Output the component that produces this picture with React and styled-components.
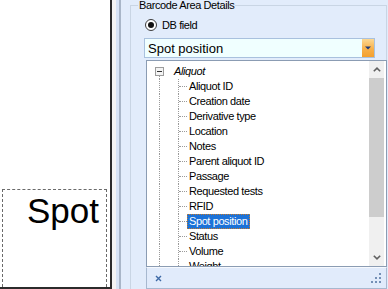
import React from 'react';
import styled, { createGlobalStyle } from 'styled-components';

const GlobalStyle = createGlobalStyle`
  html, body {
    margin: 0;
    padding: 0;
    overflow: hidden;
    background: #fff;
  }
`;

const Root = styled.div`
  position: relative;
  display: flex;
  width: 388px;
  height: 289px;
  overflow: hidden;
  font-family: "Liberation Sans", Arial, sans-serif;
  font-size: 11px;
  letter-spacing: -0.4px;
  color: #000;
`;

const Canvas = styled.div`
  box-sizing: border-box;
  width: 112px;
  height: 289px;
  flex-shrink: 0;
  display: flex;
  flex-direction: column;
  justify-content: flex-end;
  background: #fff;
  border-right: 2px solid #2b2b2b;
  border-bottom: 2px solid #2b2b2b;
`;

const LabelBox = styled.div`
  box-sizing: border-box;
  width: 105px;
  height: 98px;
  margin-left: 2px;
  border: 1px dashed #6a6a6a;
  border-bottom: none;
  padding: 1px 0 0 24px;
  font-size: 35px;
  line-height: 40px;
  letter-spacing: 0;
`;

const Panel = styled.div`
  flex: 1;
  display: flex;
  background: #e2ecfb;
`;

const Gap = styled.div`
  width: 4px;
  background: #f4f4f4;
`;

const Strip = styled.div`
  width: 3px;
  background: #d8e4f6;
`;

const Divider = styled.div`
  width: 2px;
  background: #a9b6c8;
`;

const Body = styled.div`
  flex: 1;
  display: flex;
  flex-direction: column;
  padding: 0 1px 0 9px;
  overflow: hidden;
`;

const Group = styled.fieldset`
  margin: 0;
  padding: 8px 0 0;
  min-width: 0;
  height: 330px;
  flex-shrink: 0;
  border: 1px solid #c9d5e4;
`;

const Legend = styled.legend`
  margin-left: 7px;
  padding: 0 1px;
  line-height: 11px;
  font-size: 11px;
`;

const RadioRow = styled.div`
  display: flex;
  align-items: center;
  gap: 5px;
  height: 12px;
  margin-left: 14px;
`;

const Combo = styled.div`
  box-sizing: border-box;
  display: flex;
  align-items: center;
  width: 231px;
  height: 20px;
  margin: 7px 0 0 13px;
  border: 1px solid #a9c1de;
  background: #f0ffff;
`;

const ComboText = styled.span`
  padding-left: 3px;
  font-size: 13px;
  letter-spacing: 0;
`;

const DropButton = styled.div`
  margin-left: auto;
  width: 12px;
  height: 18px;
  display: flex;
  align-items: center;
  justify-content: center;
  background: linear-gradient(#fcd892, #f7b04a 55%, #f4a02e);
`;

const Popup = styled.div`
  position: absolute;
  left: 146px;
  top: 60px;
  width: 241px;
  display: flex;
  flex-direction: column;
`;

const List = styled.div`
  box-sizing: border-box;
  height: 207px;
  display: flex;
  padding-right: 2px;
  border: 1px solid #8b9cb3;
  background: #fff;
`;

const Tree = styled.div`
  flex: 1;
  padding-top: 3px;
  overflow: hidden;
`;

const Row = styled.div`
  display: flex;
  height: 15px;
`;

const Gutter = styled.div`
  width: ${(p) => p.$w}px;
  flex-shrink: 0;
`;

const ExpanderCol = styled.div`
  width: 9px;
  display: flex;
  flex-direction: column;
  align-items: center;
  padding-top: 3px;
`;

const Stem = styled.div`
  flex: 1;
  width: 0;
  border-left: 1px dotted #9a9a9a;
`;

const VLine = styled.div`
  box-sizing: border-box;
  width: 19px;
  flex-shrink: 0;
  border-left: 1px dotted #9a9a9a;
`;

const Branch = styled.div`
  box-sizing: border-box;
  width: 9px;
  flex-shrink: 0;
  display: flex;
  align-items: center;
  border-left: 1px dotted #9a9a9a;

  &::after {
    content: '';
    flex: 1;
    border-top: 1px dotted #9a9a9a;
  }
`;

const NodeLabel = styled.div`
  box-sizing: border-box;
  height: 15px;
  line-height: 13px;
  padding: 0 2px 0 1px;
  margin-left: ${(p) => (p.$root ? 8 : 0)}px;
  border: 1px solid transparent;
  white-space: nowrap;
  font-style: ${(p) => (p.$root ? 'italic' : 'normal')};
  background: ${(p) => (p.$selected ? '#1c72d8' : 'transparent')};
  color: ${(p) => (p.$selected ? '#fff' : '#000')};
  border-color: ${(p) => (p.$selected ? '#c57a2c' : 'transparent')};
  border-style: ${(p) => (p.$selected ? 'dotted' : 'solid')};
`;

const Scrollbar = styled.div`
  width: 15px;
  display: flex;
  flex-direction: column;
  background: #f0f0f0;
`;

const ScrollButton = styled.div`
  height: 17px;
  display: flex;
  align-items: center;
  justify-content: center;
`;

const Thumb = styled.div`
  height: 139px;
  background: #cdcdcd;
`;

const Track = styled.div`
  flex: 1;
`;

const Footer = styled.div`
  box-sizing: border-box;
  height: 22px;
  display: flex;
  align-items: center;
  justify-content: space-between;
  padding: 0 4px 0 8px;
  border: 1px solid #a7b8cf;
  border-top: 1px solid #f6f9fe;
  background: #e1ebfb;
`;

const children = [
  'Aliquot ID',
  'Creation date',
  'Derivative type',
  'Location',
  'Notes',
  'Parent aliquot ID',
  'Passage',
  'Requested tests',
  'RFID',
  'Spot position',
  'Status',
  'Volume',
  'Weight',
];

const RadioIcon = () => (
  <svg width="12" height="12" viewBox="0 0 12 12">
    <circle cx="6" cy="6" r="5.5" fill="#fff" stroke="#3c3c3c" />
    <circle cx="6" cy="6" r="3" fill="#111" />
  </svg>
);

const ExpandBox = () => (
  <svg width="9" height="9" viewBox="0 0 9 9">
    <rect x="0.5" y="0.5" width="8" height="8" fill="#f4f4f4" stroke="#9c9c9c" />
    <line x1="2" y1="4.5" x2="7" y2="4.5" stroke="#333" />
  </svg>
);

const Chevron = ({ up }) => (
  <svg width="8" height="5" viewBox="0 0 8 5">
    <polyline
      points={up ? '0.8,4.3 4,1.2 7.2,4.3' : '0.8,0.7 4,3.8 7.2,0.7'}
      fill="none"
      stroke="#606060"
      strokeWidth="1.6"
    />
  </svg>
);

const App = () => {
  return (
    <Root>
      <GlobalStyle />
      <Canvas>
        <LabelBox>Spot</LabelBox>
      </Canvas>

      <Panel>
        <Gap />
        <Strip />
        <Divider />
        <Body>
          <Group>
            <Legend>Barcode Area Details</Legend>
            <RadioRow>
              <RadioIcon />
              <span>DB field</span>
            </RadioRow>
            <Combo>
              <ComboText>Spot position</ComboText>
              <DropButton>
                <svg width="6" height="4" viewBox="0 0 6 4">
                  <polygon points="0,0.5 6,0.5 3,3.5" fill="#1d3a7a" />
                </svg>
              </DropButton>
            </Combo>
          </Group>
        </Body>
      </Panel>

      <Popup>
        <List>
          <Tree>
            <Row>
              <Gutter $w={8} />
              <ExpanderCol>
                <ExpandBox />
                <Stem />
              </ExpanderCol>
              <NodeLabel $root>Aliquot</NodeLabel>
            </Row>
            {children.map((name) => (
              <Row key={name}>
                <Gutter $w={12} />
                <VLine />
                <Branch />
                <NodeLabel $selected={name === 'Spot position'}>{name}</NodeLabel>
              </Row>
            ))}
          </Tree>
          <Scrollbar>
            <ScrollButton>
              <Chevron up />
            </ScrollButton>
            <Thumb />
            <Track />
            <ScrollButton>
              <Chevron />
            </ScrollButton>
          </Scrollbar>
        </List>
        <Footer>
          <svg width="7" height="7" viewBox="0 0 7 7">
            <path d="M1 1 L6 6 M6 1 L1 6" stroke="#3f6aa6" strokeWidth="1.4" />
          </svg>
          <svg width="11" height="11" viewBox="0 0 11 11">
            {[
              [8, 0],
              [4, 4],
              [8, 4],
              [0, 8],
              [4, 8],
              [8, 8],
            ].map(([x, y]) => (
              <rect key={`${x}-${y}`} x={x} y={y} width="2" height="2" fill="#7590b6" />
            ))}
          </svg>
        </Footer>
      </Popup>
    </Root>
  );
};

export default App;
